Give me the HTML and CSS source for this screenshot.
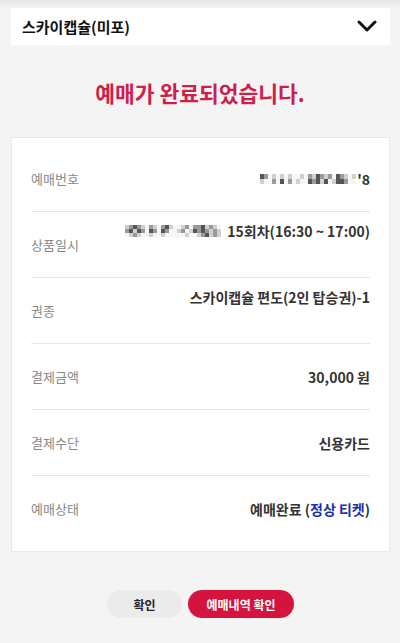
FILE: index.html
```html
<html>
<head>
<meta charset="utf-8">
<link rel="stylesheet" href="styles.css">
</head>
<body>

<div class="page">
  <div class="select-bar">
    <span class="select-name">스카이캡슐(미포)</span>
    <svg class="chevron" viewBox="0 0 20 12" width="20" height="12">
      <path d="M 2,2 L 10,10 L 18,2" fill="none" stroke="#111" stroke-width="3" stroke-linecap="round" stroke-linejoin="round"/>
    </svg>
  </div>

  <h1 class="done-title">예매가 완료되었습니다.</h1>

  <div class="card">
    <div class="row">
      <span class="label">예매번호</span>
      <span class="value">
        <span class="mosaic">
          <i class="d"></i><i class="c"></i><i class="a"></i><i class="b"></i><i class="a"></i><i class="b"></i><i class="a"></i><i class="b"></i><i class="a"></i><i class="a"></i><i class="b"></i><i class="a"></i><i class="c"></i><i class="b"></i><i class="d"></i><i class="c"></i><i class="b"></i><i class="c"></i><i class="a"></i><i class="d"></i><i class="c"></i><i class="b"></i><i class="a"></i><i class="b"></i>
          <i class="b"></i><i class="a"></i><i class="a"></i><i class="c"></i><i class="a"></i><i class="d"></i><i class="a"></i><i class="c"></i><i class="a"></i><i class="b"></i><i class="a"></i><i class="a"></i><i class="d"></i><i class="c"></i><i class="d"></i><i class="b"></i><i class="d"></i><i class="a"></i><i class="b"></i><i class="d"></i><i class="d"></i><i class="c"></i><i class="a"></i><i class="a"></i>
        </span>'8
      </span>
    </div>
    <div class="row">
      <span class="label">상품일시</span>
      <span class="value top">
        <span class="mosaic tall">
          <i class="b"></i><i class="c"></i><i class="d"></i><i class="c"></i><i class="b"></i><i class="a"></i><i class="c"></i><i class="b"></i><i class="a"></i><i class="c"></i><i class="d"></i><i class="b"></i><i class="a"></i><i class="a"></i><i class="b"></i><i class="c"></i><i class="a"></i><i class="c"></i><i class="c"></i><i class="d"></i><i class="b"></i><i class="c"></i><i class="b"></i><i class="a"></i>
          <i class="c"></i><i class="d"></i><i class="b"></i><i class="d"></i><i class="c"></i><i class="a"></i><i class="d"></i><i class="c"></i><i class="a"></i><i class="d"></i><i class="c"></i><i class="a"></i><i class="a"></i><i class="b"></i><i class="c"></i><i class="a"></i><i class="b"></i><i class="d"></i><i class="c"></i><i class="d"></i><i class="c"></i><i class="b"></i><i class="c"></i><i class="b"></i>
          <i class="a"></i><i class="b"></i><i class="c"></i><i class="b"></i><i class="a"></i><i class="a"></i><i class="b"></i><i class="a"></i><i class="a"></i><i class="b"></i><i class="a"></i><i class="a"></i><i class="a"></i><i class="a"></i><i class="a"></i><i class="b"></i><i class="a"></i><i class="a"></i><i class="b"></i><i class="c"></i><i class="d"></i><i class="b"></i><i class="c"></i><i class="b"></i>
        </span>15회차(16:30 ~ 17:00)
      </span>
    </div>
    <div class="row">
      <span class="label">권종</span>
      <span class="value top">스카이캡슐 편도(2인 탑승권)-1</span>
    </div>
    <div class="row">
      <span class="label">결제금액</span>
      <span class="value">30,000 원</span>
    </div>
    <div class="row">
      <span class="label">결제수단</span>
      <span class="value">신용카드</span>
    </div>
    <div class="row">
      <span class="label">예매상태</span>
      <span class="value">예매완료 (<span class="status">정상 티켓</span>)</span>
    </div>
  </div>

  <div class="actions">
    <button class="btn btn-grey">확인</button>
    <button class="btn btn-red">예매내역 확인</button>
  </div>
</div>

</body>
</html>
```

FILE: styles.css
```css
body {
  margin: 0;
  background: #f4f4f4;
  font-family: "Noto Sans CJK KR", "Noto Sans", sans-serif;
  color: #333;
}

.page {
  min-height: 643px;
  padding-top: 8px;
  box-sizing: border-box;
  background: linear-gradient(#e6e6e6, #f4f4f4 8px);
}

.select-bar {
  margin: 0 10px 0 11px;
  height: 37px;
  background: #fff;
  display: flex;
  align-items: center;
  justify-content: space-between;
  padding: 0 13px 0 11px;
}

.select-name {
  font-size: 15px;
  font-weight: 700;
  color: #111;
}

.chevron {
  display: block;
  margin-top: -2px;
}

.done-title {
  margin: 33px 0 0;
  text-align: center;
  font-size: 21.5px;
  line-height: 30px;
  font-weight: 700;
  color: #cc1f4c;
}

.card {
  margin: 29px 10px 0 11px;
  background: #fff;
  border: 1px solid #e9e9e9;
  padding: 8px 19px 10px;
}

.row {
  height: 65px;
  display: flex;
  align-items: center;
  justify-content: space-between;
  border-bottom: 1px solid #e6e6e6;
}

.row:last-child {
  border-bottom: none;
}

.label {
  font-size: 13px;
  color: #888;
}

.value {
  font-size: 14px;
  font-weight: 700;
  color: #333;
  display: flex;
  align-items: center;
}

.value.top {
  align-self: flex-start;
  margin-top: 9px;
}

.status {
  color: #1a2fa8;
}

.mosaic {
  display: inline-grid;
  grid-template-columns: repeat(24, 4px);
  grid-auto-rows: 5px;
  margin-right: 1px;
}

.mosaic.tall {
  grid-auto-rows: 4px;
  margin-right: 6px;
}

.mosaic i { display: block; }
.mosaic .a { background: #f6f6f6; }
.mosaic .b { background: #d0d0d0; }
.mosaic .c { background: #9a9a9a; }
.mosaic .d { background: #555; }

.actions {
  display: flex;
  justify-content: center;
  gap: 6px;
  margin-top: 38px;
  padding-left: 1px;
}

.btn {
  border: none;
  height: 28px;
  border-radius: 14px;
  font-family: inherit;
  font-size: 12px;
  font-weight: 700;
  padding: 0;
}

.btn-grey {
  width: 75px;
  background: #ebebeb;
  color: #222;
}

.btn-red {
  width: 106px;
  background: #d4143f;
  color: #fff;
}
```
